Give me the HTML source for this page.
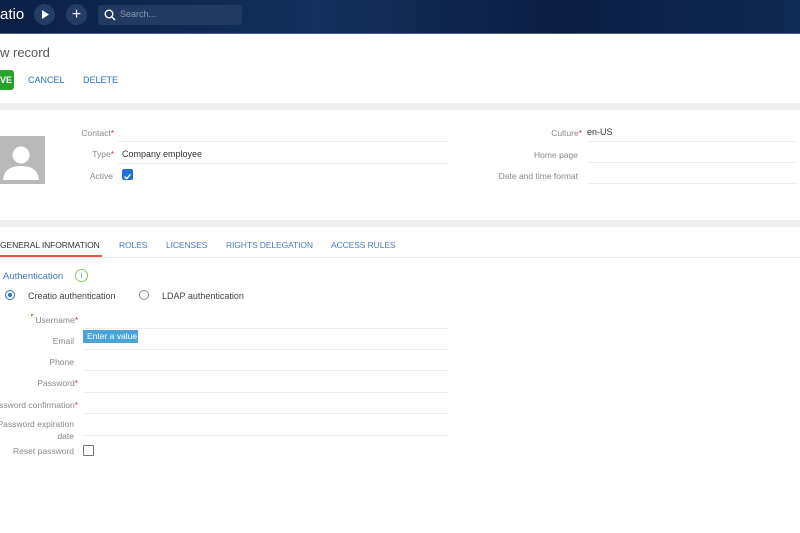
<!DOCTYPE html><html><head><style>
body{margin:0;width:800px;height:533px;overflow:hidden;background:#fff;font-family:"Liberation Sans",sans-serif;position:relative}
.a{position:absolute}
.l{position:absolute;font-size:8.5px;color:#888;text-align:right;white-space:nowrap}
.s{color:#e03030}
.ln{position:absolute;height:1px;background:#eceef0}
.t{position:absolute;font-size:8.5px;color:#4a7cc0;top:240px;letter-spacing:-0.1px}
</style></head><body>
<div class="a" style="left:0;top:0;width:800px;height:33px;background:linear-gradient(90deg,#0c1f45,#14305e 40%,#0b1d40 70%,#102a55);border-bottom:1px solid #4a6080"></div>
<div class="a" style="left:0;top:6px;color:#fff;font-size:15px">atio</div>
<div class="a" style="left:34px;top:4px;width:21px;height:21px;border-radius:50%;background:#243d66"></div>
<svg class="a" style="left:41px;top:10px" width="8" height="9"><path d="M1 0L8 4.5L1 9Z" fill="#fff"/></svg>
<div class="a" style="left:66px;top:4px;width:21px;height:21px;border-radius:50%;background:#243d66;color:#fff;font-size:16px;text-align:center;line-height:21px">+</div>
<div class="a" style="left:98px;top:5px;width:144px;height:20px;border-radius:3px;background:#223a62"></div>
<svg class="a" style="left:104px;top:9px" width="12" height="12"><circle cx="5" cy="5" r="3.8" stroke="#fff" stroke-width="1.4" fill="none"/><path d="M8 8L11 11" stroke="#fff" stroke-width="1.5"/></svg>
<div class="a" style="left:120px;top:9px;font-size:9px;color:#8a9ab5">Search...</div>
<div class="a" style="left:0;top:45px;font-size:13px;color:#555">w record</div>
<div class="a" style="left:0;top:70px;width:14px;height:20px;background:#27a32c;border-radius:0 3px 3px 0;color:#fff;font-size:9px;line-height:20px;font-weight:bold">VE</div>
<div class="a" style="left:28px;top:75px;font-size:9px;color:#2a70c2">CANCEL</div>
<div class="a" style="left:83px;top:75px;font-size:9px;color:#2a70c2">DELETE</div>
<div class="a" style="left:0;top:103px;width:800px;height:7px;background:#eeeff0"></div>
<div class="a" style="left:0;top:136px;width:45px;height:48px;background:#b9b9b9;overflow:hidden"><svg width="45" height="48"><circle cx="21" cy="19" r="8.5" fill="#fff"/><path d="M3 44Q4 30 21 30Q38 30 39 44Z" fill="#fff"/></svg></div>
<div class="l" style="right:686px;top:128px">Contact<span class="s">*</span></div>
<div class="l" style="right:686px;top:149px">Type<span class="s">*</span></div>
<div class="a" style="left:122px;top:149px;font-size:9px;color:#333">Company employee</div>
<div class="l" style="right:687px;top:171px">Active</div>
<div class="a" style="left:122px;top:169px;width:11px;height:11px;background:#1d6fd6;border-radius:2px"><svg width="11" height="11"><path d="M2.5 5.5L4.7 7.7L8.5 3.3" stroke="#fff" stroke-width="1.4" fill="none"/></svg></div>
<div class="ln" style="left:118px;top:141px;width:330px"></div>
<div class="ln" style="left:118px;top:163px;width:330px"></div>
<div class="l" style="right:218px;top:128px">Culture<span class="s">*</span></div>
<div class="a" style="left:587px;top:127px;font-size:9px;color:#333">en-US</div>
<div class="l" style="right:222px;top:150px">Home page</div>
<div class="l" style="right:222px;top:171px">Date and time format</div>
<div class="ln" style="left:588px;top:141px;width:210px"></div>
<div class="ln" style="left:588px;top:162px;width:210px"></div>
<div class="ln" style="left:588px;top:183px;width:210px"></div>
<div class="a" style="left:0;top:220px;width:800px;height:7px;background:#eeeff0"></div>
<div class="t" style="left:0;color:#333">GENERAL INFORMATION</div>
<div class="a" style="left:0;top:255px;width:102px;height:2px;background:#e8573a"></div>
<div class="ln" style="left:0;top:257px;width:800px"></div>
<div class="t" style="left:119px">ROLES</div>
<div class="t" style="left:166px">LICENSES</div>
<div class="t" style="left:226px">RIGHTS DELEGATION</div>
<div class="t" style="left:331px">ACCESS RULES</div>
<div class="a" style="left:3px;top:271px;font-size:9.5px;color:#3d78c8">Authentication</div>
<div class="a" style="left:75px;top:269px;width:11px;height:11px;border:1px solid #8cc46a;border-radius:50%;color:#7bb858;font-size:8px;text-align:center;line-height:11px">i</div>
<div class="a" style="left:5px;top:290px;width:8px;height:8px;border:1.5px solid #1d6fd6;border-radius:50%"><div class="a" style="left:2px;top:2px;width:4px;height:4px;border-radius:50%;background:#1d6fd6"></div></div>
<div class="a" style="left:28px;top:291px;font-size:9px;color:#444">Creatio authentication</div>
<div class="a" style="left:139px;top:290px;width:8px;height:8px;border:1.5px solid #888;border-radius:50%"></div>
<div class="a" style="left:162px;top:291px;font-size:9px;color:#444">LDAP authentication</div>
<div class="a" style="left:31px;top:314px;width:0;height:0;border-top:3px solid #5fb83a;border-right:3px solid transparent"></div>
<div class="l" style="right:722px;top:315px">Username<span class="s">*</span></div>
<div class="l" style="right:726px;top:336px">Email</div>
<div class="a" style="left:83px;top:330px;width:55px;height:13px;background:#4aa3d8;color:#fff;font-size:8.5px;line-height:13px;padding-left:4px;box-sizing:border-box">Enter a value</div>
<div class="l" style="right:726px;top:357px">Phone</div>
<div class="l" style="right:722px;top:378px">Password<span class="s">*</span></div>
<div class="l" style="right:722px;top:400px">ssword confirmation<span class="s">*</span></div>
<div class="l" style="right:726px;top:418px;line-height:12px">Password expiration<br>date</div>
<div class="l" style="right:726px;top:446px">Reset password</div>
<div class="a" style="left:83px;top:445px;width:9px;height:9px;border:1px solid #777;border-radius:1px"></div>
<div class="ln" style="left:83px;top:328px;width:365px"></div>
<div class="ln" style="left:83px;top:349px;width:365px"></div>
<div class="ln" style="left:83px;top:370px;width:365px"></div>
<div class="ln" style="left:83px;top:392px;width:365px"></div>
<div class="ln" style="left:83px;top:413px;width:365px"></div>
<div class="ln" style="left:83px;top:435px;width:365px"></div>
</body></html>
